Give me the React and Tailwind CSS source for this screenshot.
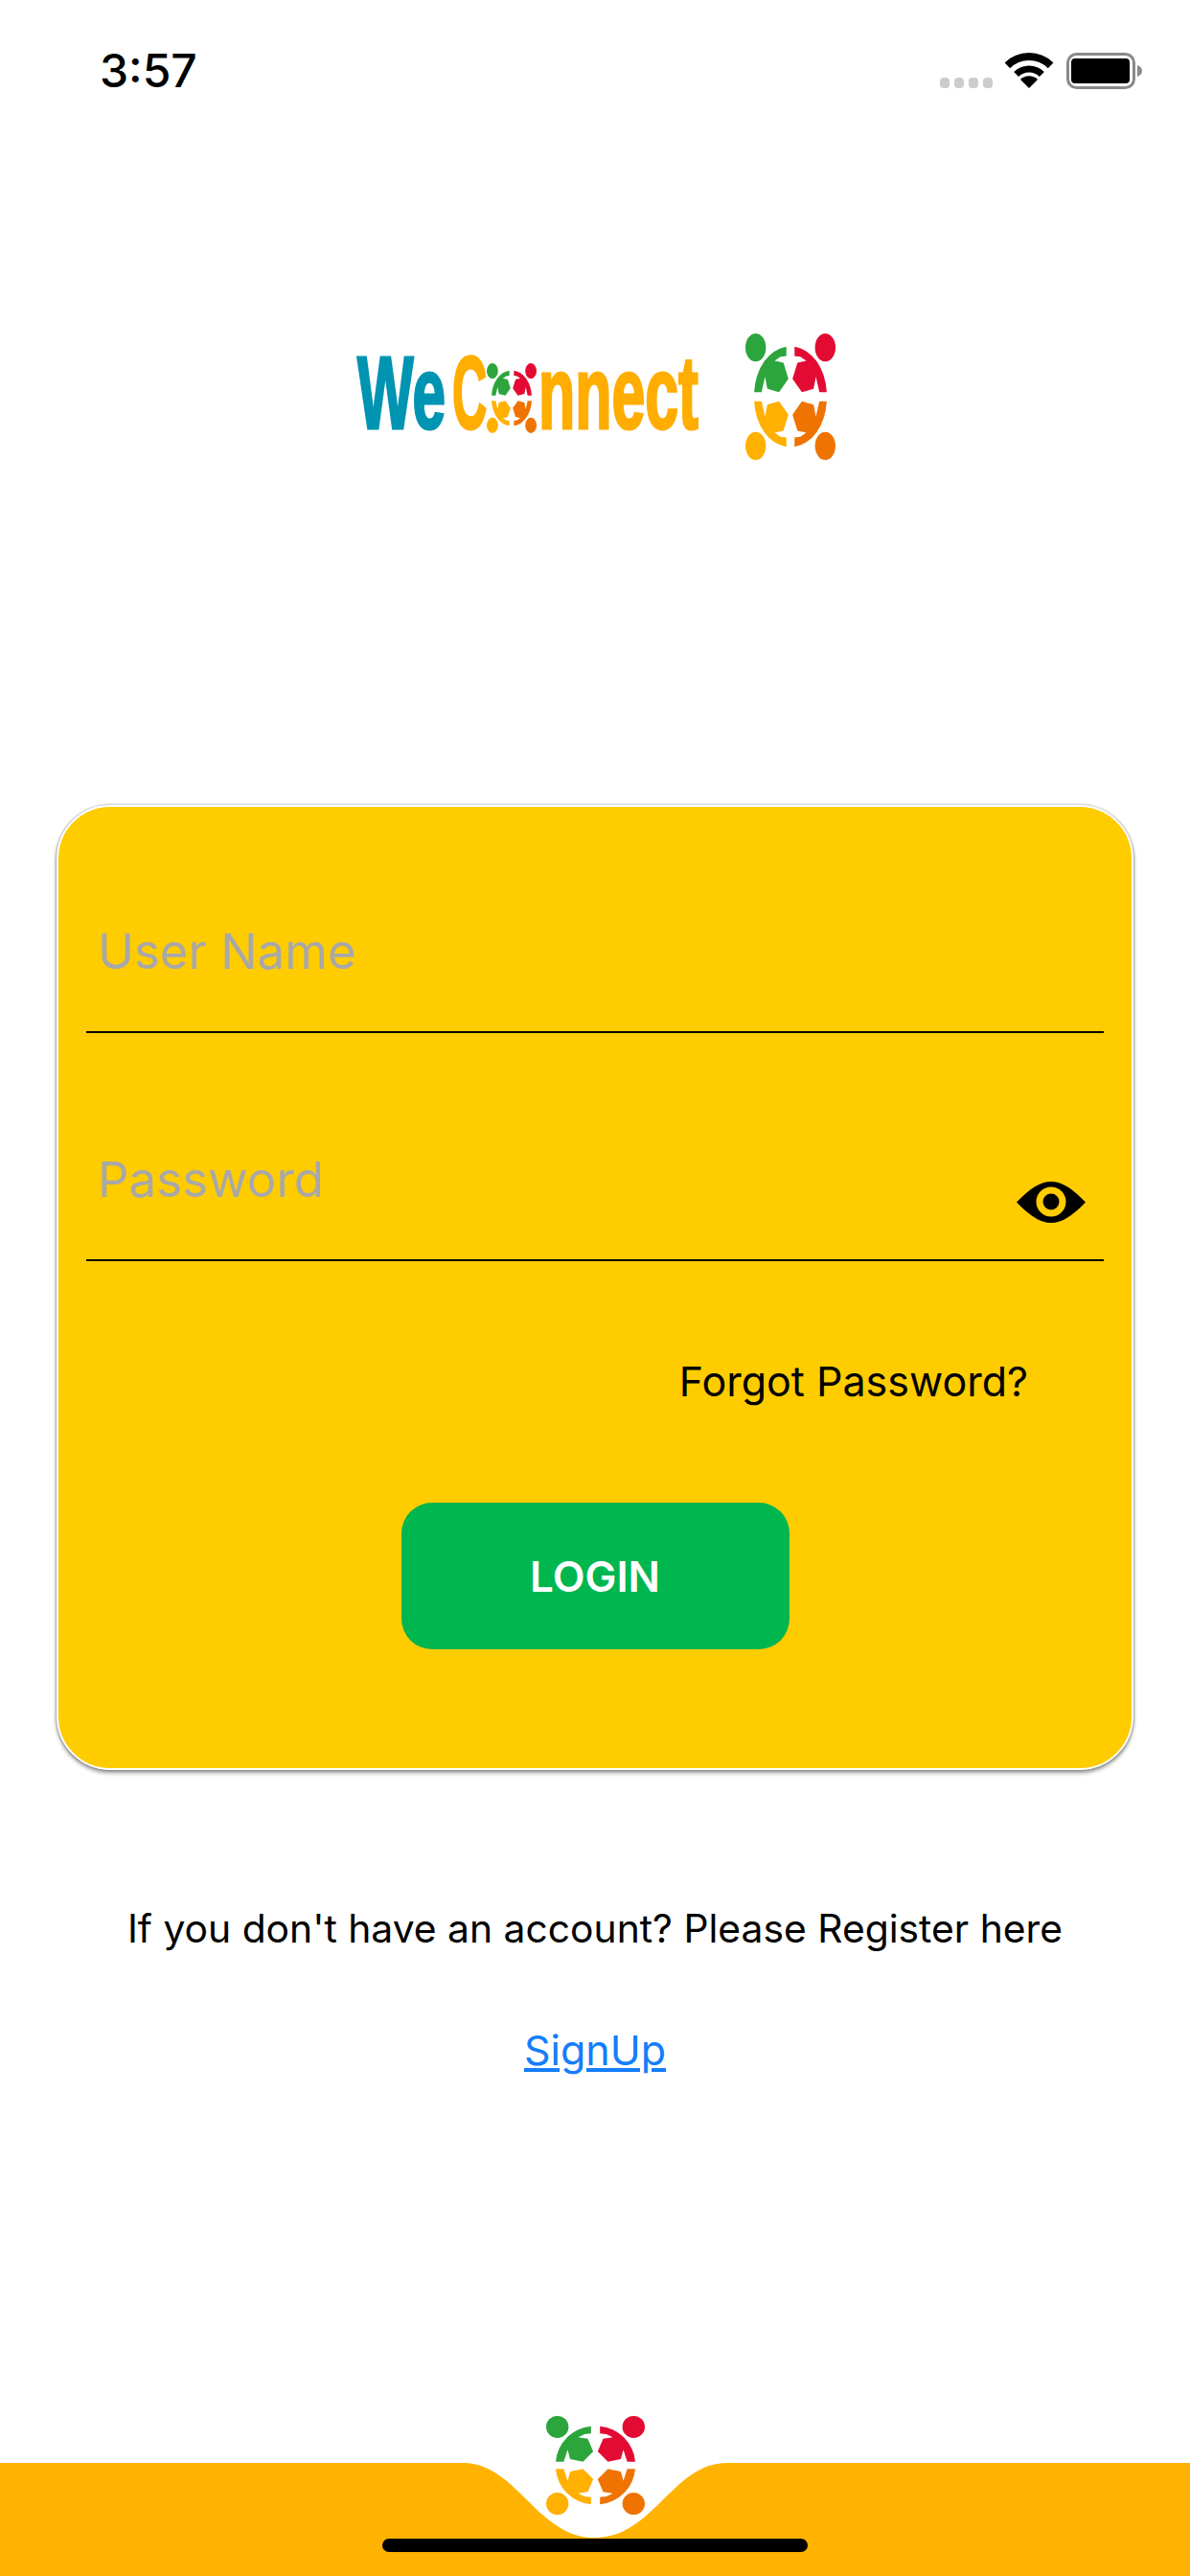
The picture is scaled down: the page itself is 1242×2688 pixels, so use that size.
import React from 'react';

function Mark({ className }) {
  const body = 'M140 33A122 122 0 0 0 30 146L55 146L67 108L75 138L115 146L147 113L130 73L100 68L120 58L140 56Z';
  return (
    <svg className={className} viewBox="0 0 308 315" preserveAspectRatio="none">
      <ellipse cx="35" cy="35" rx="35" ry="35" fill="#2ca53c" />
      <ellipse cx="273" cy="35" rx="35" ry="35" fill="#e30b33" />
      <ellipse cx="35" cy="280" rx="35" ry="35" fill="#ffb000" />
      <ellipse cx="273" cy="280" rx="35" ry="35" fill="#ef7300" />
      <path d={body} fill="#2ca53c" />
      <path d={body} fill="#e30b33" transform="matrix(-1 0 0 1 308 0)" />
      <path d={body} fill="#ffb000" transform="matrix(1 0 0 -1 0 315)" />
      <path d={body} fill="#ef7300" transform="matrix(-1 0 0 -1 308 315)" />
    </svg>
  );
}

function StatusBar() {
  return (
    <div className="h-[132px] flex justify-between items-start pl-[104px] pr-[50px]">
      <span className="mt-[48px] text-[48px] leading-[52px] font-medium text-black">3:57</span>
      <div className="flex items-start mt-[55px]">
        <div className="flex gap-[5px] mt-[26px] mr-[12px]">
          <span className="w-[10px] h-[11px] rounded-[4px] bg-[#cccccc]"></span>
          <span className="w-[10px] h-[11px] rounded-[4px] bg-[#cccccc]"></span>
          <span className="w-[10px] h-[11px] rounded-[4px] bg-[#cccccc]"></span>
          <span className="w-[10px] h-[11px] rounded-[4px] bg-[#cccccc]"></span>
        </div>
        <svg className="w-[52px] h-[37px] mr-[13px]" viewBox="0 0 52 37">
          <path d="M3.4 13.4A32 32 0 0 1 48.6 13.4" fill="none" stroke="#000" strokeWidth="8" />
          <path d="M12.6 22.6A19 19 0 0 1 39.4 22.6" fill="none" stroke="#000" strokeWidth="7" />
          <path d="M26 37L17 28A12.7 12.7 0 0 1 35 28Z" fill="#000" />
        </svg>
        <svg className="w-[79px] h-[38px]" viewBox="0 0 79 38">
          <rect x="1.5" y="1.5" width="69" height="35" rx="9" fill="#fff" stroke="#8a8a8a" strokeWidth="3" />
          <rect x="5" y="6" width="61" height="26" rx="4" fill="#000" />
          <path d="M74 13C77 14 79 16 79 19S77 24 74 25Z" fill="#8a8a8a" />
        </svg>
      </div>
    </div>
  );
}

function Logo() {
  const letters = "block font-['Liberation_Sans',sans-serif] text-[107px] leading-none font-bold whitespace-nowrap origin-left";
  return (
    <div className="mt-[216px] pl-[373px] flex items-start">
      <div className="flex items-start w-[357px]">
        <div className="w-[89px] mt-[9px] mr-[10px]">
          <span className={`${letters} scale-x-[0.58] text-[#0094b3] [-webkit-text-stroke:3px_#0094b3]`}>We</span>
        </div>
        <div className="w-[36px] mt-[9px]">
          <span className={`${letters} scale-x-[0.47] text-[#ffad00] [-webkit-text-stroke:3px_#ffad00]`}>C</span>
        </div>
        <Mark className="w-[52px] h-[73px] mt-[31px] mr-[2px] shrink-0" />
        <div className="w-[168px] mt-[9px]">
          <span className={`${letters} scale-x-[0.585] text-[#ffad00] [-webkit-text-stroke:3px_#ffad00]`}>nnect</span>
        </div>
      </div>
      <Mark className="w-[94px] h-[132px] ml-[48px] shrink-0" />
    </div>
  );
}

function Field({ placeholder, children }) {
  return (
    <div className="relative border-b-2 border-black pb-[53px] mb-[123px]">
      <input
        className="w-full h-[60px] pl-[12px] bg-transparent outline-none text-[51px] placeholder:text-[#a8a8a8]"
        placeholder={placeholder}
        readOnly
      />
      {children}
    </div>
  );
}

function LoginCard() {
  return (
    <div className="mt-[360px] mx-[59px] h-[1007px] rounded-[56px] border-2 border-white bg-[#ffcc00] px-[29px] pt-[121px] shadow-[0_3px_4px_rgba(0,0,0,0.4),0_0_3px_rgba(0,0,0,0.4)]">
      <Field placeholder="User Name" />
      <Field placeholder="Password">
        <svg className="absolute right-[19px] top-[32px] w-[72px] h-[43px]" viewBox="0 0 72 43">
          <path d="M0 21.5C14 7 25 0 36 0S58 7 72 21.5C58 36 47 43 36 43S14 36 0 21.5Z" fill="#000" />
          <circle cx="36" cy="21" r="15.5" fill="#ffcc00" />
          <circle cx="36" cy="21" r="8.5" fill="#000" />
        </svg>
      </Field>
      <div className="-mt-[23px] pr-[79px] text-right text-[43px] leading-[50px] text-black">Forgot Password?</div>
      <button className="block mx-auto mt-[102px] w-[405px] h-[153px] rounded-[32px] bg-[#00b64f] text-white text-[44px] font-semibold">
        LOGIN
      </button>
    </div>
  );
}

function Footer() {
  return (
    <div className="relative mt-auto h-[118px]">
      <svg className="absolute inset-0 w-full h-full" viewBox="0 0 1242 118" preserveAspectRatio="none">
        <path
          d="M0 0H483C540 0 560 78 621 78C682 78 702 0 759 0H1242V118H0Z"
          fill="#ffb300"
        />
      </svg>
      <Mark className="absolute left-[570px] -top-[49px] w-[103px] h-[103px]" />
      <div className="absolute left-[399px] top-[79px] w-[444px] h-[14px] rounded-full bg-black"></div>
    </div>
  );
}

export default function App() {
  return (
    <div className="w-[1242px] h-[2688px] flex flex-col bg-white font-['Inter',sans-serif] overflow-hidden">
      <StatusBar />
      <Logo />
      <LoginCard />
      <p className="mt-[140px] text-center text-[40.8px] leading-[50px] text-black">If you don't have an account? Please Register here</p>
      <a className="mt-[77px] text-center text-[43px] leading-[50px] text-[#147efb] underline">SignUp</a>
      <Footer />
    </div>
  );
}
